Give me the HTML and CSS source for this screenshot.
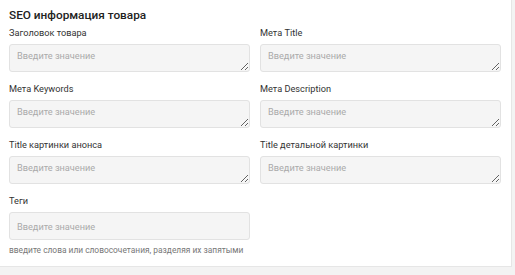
FILE: index.html
```html
<!DOCTYPE html>
<html lang="ru">
<head>
<meta charset="utf-8">
<link rel="stylesheet" href="styles.css">
</head>
<body>
<div class="card">
  <h2 class="title">SEO информация товара</h2>
  <div class="grid">
    <div class="field">
      <label class="label">Заголовок товара</label>
      <textarea class="control area" placeholder="Введите значение"></textarea>
    </div>
    <div class="field">
      <label class="label">Мета Title</label>
      <textarea class="control area" placeholder="Введите значение"></textarea>
    </div>
    <div class="field">
      <label class="label">Мета Keywords</label>
      <textarea class="control area" placeholder="Введите значение"></textarea>
    </div>
    <div class="field">
      <label class="label">Мета Description</label>
      <textarea class="control area" placeholder="Введите значение"></textarea>
    </div>
    <div class="field">
      <label class="label">Title картинки анонса</label>
      <textarea class="control area" placeholder="Введите значение"></textarea>
    </div>
    <div class="field">
      <label class="label">Title детальной картинки</label>
      <textarea class="control area" placeholder="Введите значение"></textarea>
    </div>
    <div class="field">
      <label class="label">Теги</label>
      <input class="control input" type="text" placeholder="Введите значение">
      <div class="help">введите слова или словосочетания, разделяя их запятыми</div>
    </div>
  </div>
</div>
</body>
</html>
```

FILE: styles.css
```css
html, body {
  margin: 0;
  padding: 0;
  background: #f3f3f3;
  font-family: Roboto, "Liberation Sans", sans-serif;
}
.card {
  box-sizing: border-box;
  width: 512px;
  height: 267px;
  background: #fff;
  border-right: 1px solid #e6e6e6;
  border-bottom: 1px solid #e6e6e6;
  padding: 8px 10px 0 9px;
}
.title {
  margin: 0;
  font-size: 11.8px;
  font-weight: 500;
  color: #222;
  line-height: 14px;
}
.grid {
  display: grid;
  grid-template-columns: minmax(0, 1fr) minmax(0, 1fr);
  grid-auto-rows: 56px;
  column-gap: 10px;
  margin-top: 5px;
}
.field {
  display: flex;
  flex-direction: column;
  min-width: 0;
}
.label {
  flex-shrink: 0;
  font-size: 9.2px;
  color: #333;
  line-height: 12px;
  height: 12px;
  margin-bottom: 5px;
}
.control {
  flex-shrink: 0;
  box-sizing: border-box;
  width: 100%;
  height: 28px;
  margin: 0;
  background: #f5f5f5;
  border: 1px solid #e2e2e2;
  border-radius: 3px;
  font-family: Roboto, "Liberation Sans", sans-serif;
  font-size: 9.2px;
  color: #555;
  padding: 5px 7px;
  outline: none;
}
.area {
  resize: vertical;
  line-height: 12px;
}
.input {
  padding: 0 7px;
}
.control::placeholder {
  color: #aaa;
}
.help {
  flex-shrink: 0;
  font-size: 8.4px;
  color: #777;
  margin-top: 4px;
  line-height: 12px;
  white-space: nowrap;
}
```
